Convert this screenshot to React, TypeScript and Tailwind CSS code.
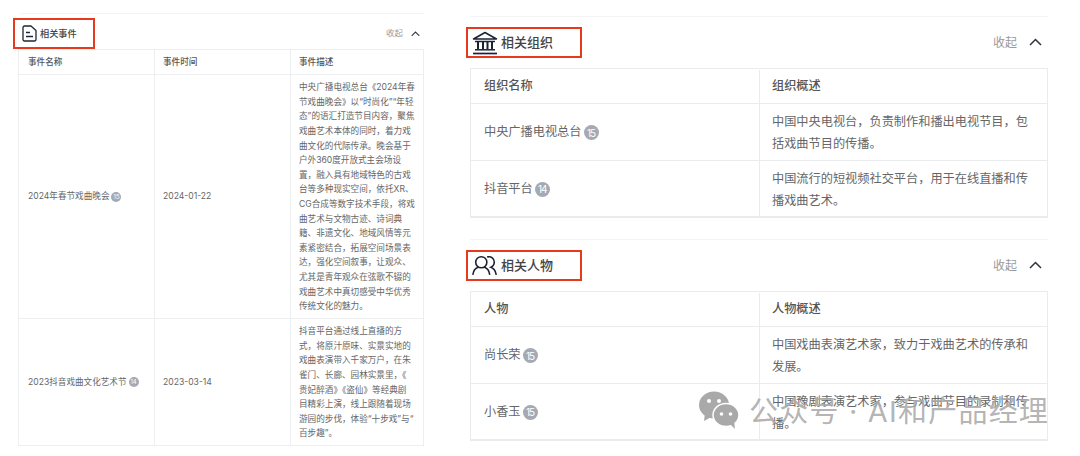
import React from "react";

const FONT = "[font-family:Inter,'Noto_Sans_CJK_SC',sans-serif]";

function Badge({ n, big }: { n: number; big?: boolean }) {
  return (
    <span
      className={
        big
          ? "ml-[2px] inline-flex h-[15px] w-[15px] items-center justify-center rounded-full bg-[#a5a9b3] text-[10px] leading-none tracking-[-1px] text-white"
          : "ml-[2px] inline-flex h-[10px] w-[10px] items-center justify-center rounded-full bg-[#a5a9b3] text-[6px] leading-none text-white"
      }
    >
      {n}
    </span>
  );
}

function Chevron({ size }: { size: number }) {
  return (
    <svg width={size} height={size * 0.62} viewBox="0 0 13 8" fill="none" stroke="#30343c" strokeWidth="1.5">
      <path d="M1 7 L6.5 1.5 L12 7" />
    </svg>
  );
}

function DocIcon() {
  return (
    <svg width="15" height="17" viewBox="0 0 15 17" fill="none" stroke="#1f2533" strokeWidth="1.3" strokeLinejoin="round">
      <path d="M2.500 1h6.500l5 4.500v9a1.500 1.500 0 0 1-1.500 1.500h-10a1.500 1.500 0 0 1-1.500-1.500v-12a1.500 1.500 0 0 1 1.500-1.500z" />
      <path d="M4 7.500h4M4 11.500h7" />
    </svg>
  );
}

function BankIcon() {
  return (
    <svg width="26" height="24" viewBox="0 0 26 24" fill="none" stroke="#1c2233" strokeWidth="1.5">
      <path d="M1.500 8 L13 1.500 L24.500 8 Z" strokeLinejoin="round" />
      <path d="M3 10.500h20" />
      <path d="M6 11v7M11 11v7M15.500 11v7M20 11v7" strokeWidth="2" />
      <path d="M3 18.800h20" />
      <path d="M1 22.500h24" strokeWidth="1.700" />
    </svg>
  );
}

function PeopleIcon() {
  return (
    <svg width="26" height="21" viewBox="0 0 28 22" fill="none" stroke="#1c2233" strokeWidth="1.7" strokeLinecap="round">
      <circle cx="10" cy="7.500" r="6" />
      <path d="M1 20.500c.6-4 3-6.500 5.500-7.500M19 20.500c-.6-4-3-6.500-5.500-7.500" />
      <path d="M17 1.700c3.600-.9 7 1.700 7 5.600 0 2.600-1.300 4.600-3.600 5.600 2.800 1.100 4.900 3.900 5.600 7.600" />
    </svg>
  );
}

function WeChatIcon() {
  return (
    <svg width="40" height="38" viewBox="0 0 40 38">
      <ellipse cx="15" cy="14" rx="15" ry="13.500" fill="#a9a9a9" />
      <path d="M6 22 L5 30 L14 25 Z" fill="#a9a9a9" />
      <circle cx="10" cy="10" r="2" fill="#fff" />
      <circle cx="20" cy="10" r="2" fill="#fff" />
      <ellipse cx="27" cy="24" rx="13" ry="11.500" fill="#a9a9a9" stroke="#fff" strokeWidth="1.500" />
      <path d="M31 33 L36 38 L35 30 Z" fill="#a9a9a9" />
      <circle cx="22.500" cy="23" r="1.800" fill="#fff" />
      <circle cx="31.500" cy="23" r="1.800" fill="#fff" />
    </svg>
  );
}

const leftRow1 = [
  "中央广播电视总台《2024年春",
  "节戏曲晚会》以“时尚化”“年轻",
  "态”的语汇打造节目内容，聚焦",
  "戏曲艺术本体的同时，着力戏",
  "曲文化的代际传承。晚会基于",
  "户外360度开放式主会场设",
  "置，融入具有地域特色的古戏",
  "台等多种现实空间，依托XR、",
  "CG合成等数字技术手段，将戏",
  "曲艺术与文物古迹、诗词典",
  "籍、非遗文化、地域风情等元",
  "素紧密结合，拓展空间场景表",
  "达，强化空间叙事，让观众、",
  "尤其是青年观众在弦歌不辍的",
  "戏曲艺术中真切感受中华优秀",
  "传统文化的魅力。",
];

const leftRow2 = [
  "抖音平台通过线上直播的方",
  "式，将原汁原味、实景实地的",
  "戏曲表演带入千家万户，在朱",
  "雀门、长廊、园林实景里，《",
  "贵妃醉酒》《盗仙》等经典剧",
  "目精彩上演，线上跟随着现场",
  "游园的步伐，体验“十步戏”与“",
  "百步趣”。",
];

function Lines({ lines }: { lines: string[] }) {
  return (
    <>
      {lines.map((l) => (
        <span key={l} className="block whitespace-nowrap">
          {l}
        </span>
      ))}
    </>
  );
}

function BigSection({
  icon,
  title,
  heads,
  rows,
}: {
  icon: React.ReactNode;
  title: string;
  heads: [string, string];
  rows: { name: string; n: number; desc: [string, string]; h: string }[];
}) {
  return (
    <section className="border-t border-[#f3f4f5] pt-[10px]">
      <div className="flex h-[31px] items-center justify-between pr-[6px]">
        <div className="ml-[-4px] box-border flex h-[31px] w-[116px] items-center gap-[3px] border-2 border-[#e63a1f] pl-[4px]">
          {icon}
          <span className="text-[13px] font-medium text-[#444]">{title}</span>
        </div>
        <div className="flex items-center gap-[12px] text-[12px] text-[#9a9a9a]">
          收起
          <Chevron size={13} />
        </div>
      </div>
      <div className="mt-[10px] border border-b-2 border-[#e9ebed]">
        <div className="grid h-[35px] grid-cols-2 border-b border-[#e9ebed] pt-[1px] text-[12.2px] font-medium text-[#555]">
          <div className="flex items-center pl-[13px]">{heads[0]}</div>
          <div className="flex items-center border-l border-[#e9ebed] pl-[12px]">{heads[1]}</div>
        </div>
        {rows.map((r, i) => (
          <div
            key={r.name}
            className={`grid grid-cols-2 text-[12.2px] text-[#666] ${r.h} ${i === 0 ? "border-b border-[#e9ebed]" : ""}`}
          >
            <div className="flex items-center pl-[13px] pt-[1px]">
              {r.name}
              <Badge n={r.n} big />
            </div>
            <div className="flex flex-col justify-center border-l border-[#e9ebed] pl-[12px] pt-[2px] leading-[22px]">
              <span className="whitespace-nowrap">{r.desc[0]}</span>
              <span className="whitespace-nowrap">{r.desc[1]}</span>
            </div>
          </div>
        ))}
      </div>
    </section>
  );
}

export default function App() {
  return (
    <div className={`relative flex h-[456px] w-[1080px] overflow-hidden bg-white pl-[18px] ${FONT}`}>
      <div className="w-[406px] pt-[13px]">
        <div className="ml-[2px] border-t border-[#f3f4f5] pt-[4px]">
          <div className="ml-[-7px] flex h-[31px] items-center justify-between pr-[4px]">
            <div className="box-border flex h-[31px] w-[82px] items-center gap-[3px] border-2 border-[#e63a1f] pl-[7px]">
              <DocIcon />
              <span className="text-[9.2px] font-medium text-[#444]">相关事件</span>
            </div>
            <div className="flex items-center gap-[8px] text-[8.5px] text-[#9a9a9a]">
              收起
              <Chevron size={9} />
            </div>
          </div>
        </div>
        <div className="border border-[#eceef0] text-[8.6px] text-[#666]">
          <div className="grid h-[25px] grid-cols-[135px_136px_1fr] border-b border-[#eceef0] font-medium text-[#555]">
            <div className="flex items-center pl-[9px]">事件名称</div>
            <div className="flex items-center border-l border-[#eceef0] pl-[8px]">事件时间</div>
            <div className="flex items-center border-l border-[#eceef0] pl-[8px]">事件描述</div>
          </div>
          <div className="grid h-[244px] grid-cols-[135px_136px_1fr] border-b border-[#eceef0]">
            <div className="flex items-center pl-[9px]">
              2024年春节戏曲晚会
              <Badge n={15} />
            </div>
            <div className="flex items-center border-l border-[#eceef0] pl-[8px]">2024-01-22</div>
            <div className="flex flex-col justify-center border-l border-[#eceef0] pl-[8px] pt-[1px] leading-[14.6px]">
              <Lines lines={leftRow1} />
            </div>
          </div>
          <div className="grid h-[126px] grid-cols-[135px_136px_1fr]">
            <div className="flex items-center pl-[9px]">
              2023抖音戏曲文化艺术节
              <Badge n={14} />
            </div>
            <div className="flex items-center border-l border-[#eceef0] pl-[8px]">2023-03-14</div>
            <div className="flex flex-col justify-center border-l border-[#eceef0] pl-[8px] pt-[1px] leading-[14.6px]">
              <Lines lines={leftRow2} />
            </div>
          </div>
        </div>
      </div>

      <div className="ml-[46px] flex w-[578px] flex-col gap-[21px] pt-[16px]">
        <BigSection
          icon={<BankIcon />}
          title="相关组织"
          heads={["组织名称", "组织概述"]}
          rows={[
            { name: "中央广播电视总台", n: 15, desc: ["中国中央电视台，负责制作和播出电视节目，包", "括戏曲节目的传播。"], h: "h-[57px]" },
            { name: "抖音平台", n: 14, desc: ["中国流行的短视频社交平台，用于在线直播和传", "播戏曲艺术。"], h: "h-[55px]" },
          ]}
        />
        <BigSection
          icon={<PeopleIcon />}
          title="相关人物"
          heads={["人物", "人物概述"]}
          rows={[
            { name: "尚长荣", n: 15, desc: ["中国戏曲表演艺术家，致力于戏曲艺术的传承和", "发展。"], h: "h-[57px]" },
            { name: "小香玉", n: 15, desc: ["中国豫剧表演艺术家，参与戏曲节目的录制和传", "播。"], h: "h-[55px]" },
          ]}
        />
      </div>

      <div className="absolute left-[699px] top-[391px] flex items-start gap-[10px]">
        <WeChatIcon />
        <span className="mt-[2px] whitespace-nowrap text-[29px] font-normal leading-[38px] tracking-[1.2px] text-[#ababab]/90">公众号 · AI和产品经理</span>
      </div>
    </div>
  );
}
